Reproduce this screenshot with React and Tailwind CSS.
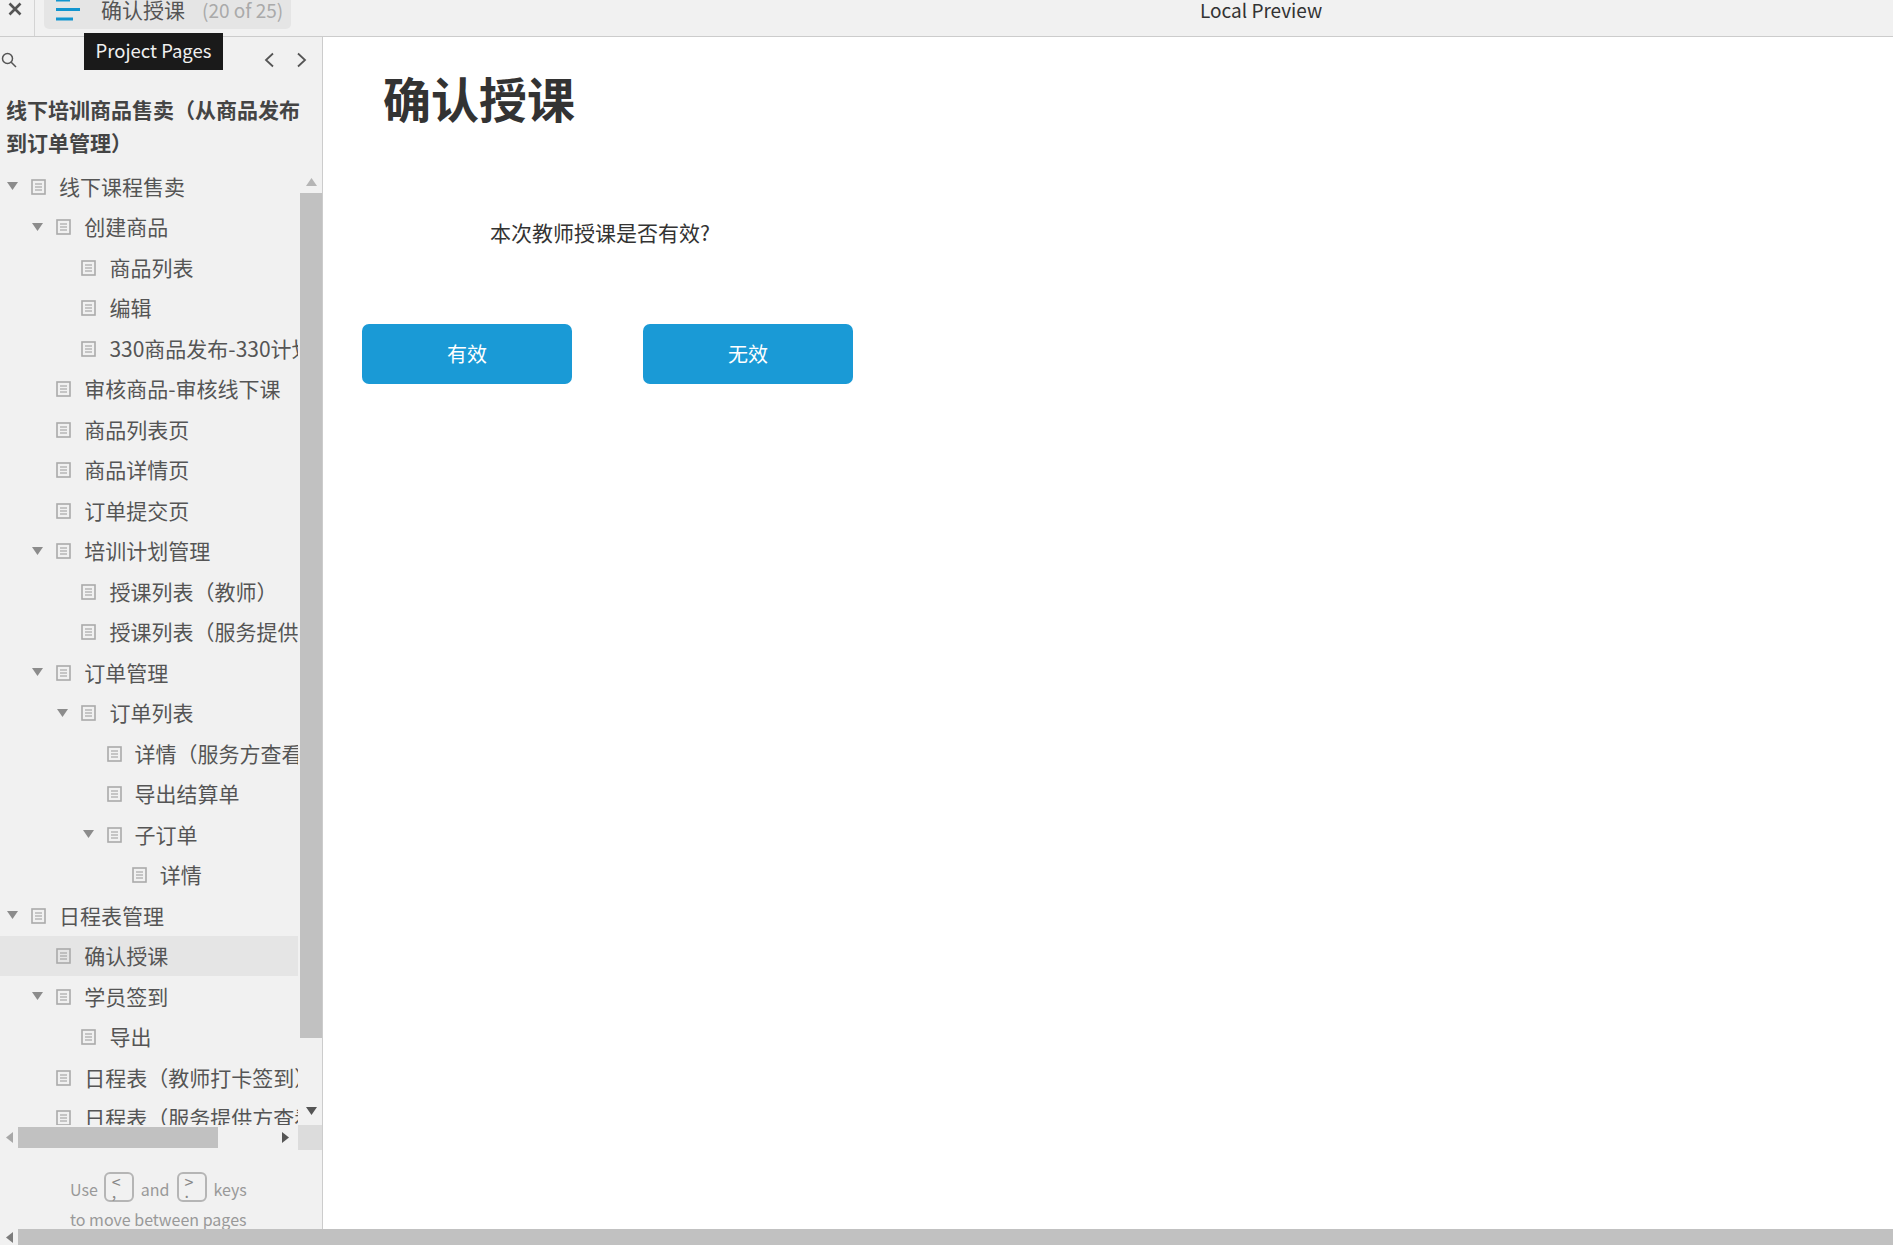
const rows = [
  ["线下课程售卖", 0, true],
  ["创建商品", 1, true],
  ["商品列表", 2],
  ["编辑", 2],
  ["330商品发布-330计划管理", 2],
  ["审核商品-审核线下课", 1],
  ["商品列表页", 1],
  ["商品详情页", 1],
  ["订单提交页", 1],
  ["培训计划管理", 1, true],
  ["授课列表（教师）", 2],
  ["授课列表（服务提供方）", 2],
  ["订单管理", 1, true],
  ["订单列表", 2, true],
  ["详情（服务方查看）", 3],
  ["导出结算单", 3],
  ["子订单", 3, true],
  ["详情", 4],
  ["日程表管理", 0, true],
  ["确认授课", 1, false, true],
  ["学员签到", 1, true],
  ["导出", 2],
  ["日程表（教师打卡签到）", 1],
  ["日程表（服务提供方查看）", 1],
];

const PageIcon = () => (
  <svg width="15" height="16" viewBox="0 0 15 16" className="mt-[1px] shrink-0">
    <rect x="1" y="1" width="13" height="14" fill="none" stroke="#aaaaaa" strokeWidth="1.6" />
    <path d="M4 5h7M4 8h7M4 11h7" stroke="#999999" strokeWidth="1.2" />
  </svg>
);

const Tri = ({ dir = "down", color = "#8c8c8c", w = 11, h = 8 }) => {
  const d = {
    down: `M0 0H${w}L${w / 2} ${h}Z`,
    up: `M0 ${h}H${w}L${w / 2} 0Z`,
    left: `M${w} 0V${h}L0 ${h / 2}Z`,
    right: `M0 0V${h}L${w} ${h / 2}Z`,
  }[dir];
  return (
    <svg width={w} height={h} viewBox={`0 0 ${w} ${h}`} className="shrink-0">
      <path d={d} fill={color} />
    </svg>
  );
};

const Row = ({ label, level, arrow, selected }) => (
  <div
    className={`flex items-center h-[40.5px] shrink-0 whitespace-nowrap ${selected ? "bg-[#e5e5e5]" : ""}`}
    style={{ paddingLeft: 7 + level * 25.2 }}
  >
    <span className="flex w-[24px] shrink-0 items-center">{arrow && <Tri />}</span>
    <PageIcon />
    <span className="ml-[13px] text-[21px] leading-none text-[#555555]">{label}</span>
  </div>
);

const Key = ({ top, bottom, ml }) => (
  <span className={`${ml} mr-[7px] -mt-[5px] inline-flex h-[30px] w-[30px] flex-col rounded-[6px] border-2 border-[#b5b5b5] pl-[6px] pt-[2px] text-[16px] leading-[10px] text-[#888888]`}>
    <span>{top}</span>
    <span>{bottom}</span>
  </span>
);

export default function App() {
  return (
    <div className="relative flex h-[1245px] w-full flex-col overflow-hidden bg-white font-['Noto_Sans_CJK_SC','Liberation_Sans',sans-serif]">
      {/* top bar */}
      <div className="flex h-[37px] shrink-0 border-b border-[#cccccc] bg-[#f1f1f1]">
        <div className="flex w-[35px] shrink-0 justify-center border-r border-[#d4d4d4] pt-[2px]">
          <svg width="14" height="14" viewBox="0 0 14 14" className="-ml-[5px]">
            <path d="M1.5 1.5l11 11M12.5 1.5l-11 11" stroke="#555555" strokeWidth="2.6" />
          </svg>
        </div>
        <div className="ml-[9px] flex h-[29px] w-[247px] items-start rounded-b-[5px] bg-[#e5e5e5]">
          <svg width="26" height="23" viewBox="0 0 26 23" className="-mt-[1px] ml-[11px] shrink-0">
            <path d="M1 1h14M1 10.5h24M1 20h17" stroke="#1295cf" strokeWidth="3" />
          </svg>
          <span className="ml-[20px] -mt-[1px] whitespace-nowrap text-[21px] leading-[21px] text-[#555555]">确认授课</span>
          <span className="ml-[17px] -mt-[1px] whitespace-nowrap text-[19px] leading-[21px] text-[#aaaaaa]">(20 of 25)</span>
        </div>
        <div className="flex-1 pl-[909px]">
          <span className="block whitespace-nowrap text-[19px] leading-[20px] text-[#333333]">Local Preview</span>
        </div>
      </div>

      {/* tooltip */}
      <div className="absolute left-[84px] top-[33px] z-10 flex h-[37px] w-[139px] items-center justify-center whitespace-nowrap bg-[#1a1a1a] pb-[2px] text-[18.5px] text-[#f0f0f0]">
        Project Pages
      </div>

      {/* main */}
      <div className="flex min-h-0 flex-1">
        <aside className="flex w-[323px] shrink-0 flex-col border-r border-[#cccccc] bg-[#f1f1f1]">
          <div className="flex h-[55.5px] shrink-0 items-center justify-between pb-[9px] pl-[1px] pr-[14px]">
            <svg width="16" height="16" viewBox="0 0 16 16">
              <circle cx="6.5" cy="6.5" r="5" fill="none" stroke="#555555" strokeWidth="1.5" />
              <path d="M10.2 10.2L15 15" stroke="#555555" strokeWidth="1.5" />
            </svg>
            <div className="flex gap-[19px]">
              <svg width="13" height="16" viewBox="0 0 13 16">
                <path d="M10 1.5L3 8l7 6.5" fill="none" stroke="#555555" strokeWidth="1.8" />
              </svg>
              <svg width="13" height="16" viewBox="0 0 13 16">
                <path d="M3 1.5L10 8l-7 6.5" fill="none" stroke="#555555" strokeWidth="1.8" />
              </svg>
            </div>
          </div>
          <div className="shrink-0 px-[6px] text-[21px] font-bold leading-[33px] text-[#444444]">
            线下培训商品售卖（从商品发布到订单管理）
          </div>
          <div className="flex h-[966.5px] shrink-0 pt-[7.5px]">
            <div className="flex w-[298px] shrink-0 flex-col overflow-hidden">
              {rows.map(([label, level, arrow, selected]) => (
                <Row key={label + level} label={label} level={level} arrow={arrow} selected={selected} />
              ))}
            </div>
            <div className="-mt-[7.5px] flex w-[24px] shrink-0 flex-col items-end">
              <div className="flex h-[34px] w-full shrink-0 items-center justify-end pr-[5px] pt-[12px]">
                <Tri dir="up" color="#b5b5b5" />
              </div>
              <div className="h-[845px] w-[22px] shrink-0 bg-[#c1c1c1]" />
              <div className="mt-[69px] flex w-full justify-end pr-[5px]">
                <Tri dir="down" color="#555555" />
              </div>
            </div>
          </div>
          <div className="flex h-[25px] shrink-0 items-center">
            <div className="flex w-[18px] shrink-0 justify-center"><Tri dir="left" color="#a8a8a8" w={7} h={11} /></div>
            <div className="h-[21px] w-[200px] shrink-0 bg-[#c1c1c1]" />
            <div className="ml-[64px] shrink-0"><Tri dir="right" color="#555555" w={7} h={11} /></div>
            <div className="ml-[9px] h-[25px] flex-1 bg-[#dcdcdc]" />
          </div>
          <div className="min-h-0 flex-1 overflow-hidden pl-[70px] pt-[22px] text-[16px] text-[#999999]">
            <div className="flex h-[32px] items-center whitespace-nowrap pt-[2px]">
              <span>Use</span>
              <Key ml="ml-[6px]" top="<" bottom="," />
              <span>and</span>
              <Key ml="ml-[7px]" top=">" bottom="." />
              <span>keys</span>
            </div>
            <div className="mt-[3px] whitespace-nowrap leading-[24px]">to move between pages</div>
          </div>
        </aside>

        <main className="min-w-0 flex-1 bg-white">
          <h1 className="ml-[60px] mt-[30px] text-[48px] font-bold leading-[60px] text-[#333333]">确认授课</h1>
          <p className="ml-[167px] mt-[90px] text-[21px] leading-[30px] text-[#333333]">本次教师授课是否有效?</p>
          <div className="ml-[39px] mt-[77px] flex gap-[71px]">
            <button className="h-[60px] w-[210px] rounded-[7px] bg-[#1a9ad6] text-[20px] text-white">有效</button>
            <button className="h-[60px] w-[210px] rounded-[7px] bg-[#1a9ad6] text-[20px] text-white">无效</button>
          </div>
        </main>
      </div>

      {/* page horizontal scrollbar */}
      <div className="flex h-[16px] shrink-0 items-center bg-[#f1f1f1]">
        <div className="flex w-[18px] shrink-0 justify-center"><Tri dir="left" color="#7c7c7c" w={7} h={11} /></div>
        <div className="h-full flex-1 bg-[#c1c1c1]" />
      </div>
    </div>
  );
}
